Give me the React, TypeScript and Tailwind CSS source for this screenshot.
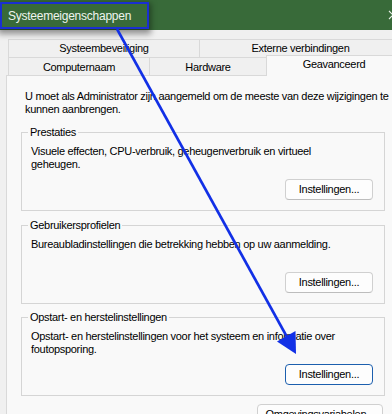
import React from "react";

type GroupProps = {
  title: string;
  lines: string[];
  className?: string;
};

const SettingsButton = ({ label, focused = false }: { label: string; focused?: boolean }) => (
  <button
    className={
      focused
        ? "flex h-[21px] w-[88px] items-center justify-center rounded-[4px] border border-[#1c5fae] bg-[#fdfdfd] text-[11px] leading-[13px] tracking-[-0.3px] text-black"
        : "flex h-[21px] w-[88px] items-center justify-center rounded-[4px] border border-[#d0d0d0] border-b-[#bdbdbd] bg-[#fdfdfd] text-[11px] leading-[13px] tracking-[-0.3px] text-black"
    }
  >
    {label}
  </button>
);

const GroupBox = ({ title, lines, className = "" }: GroupProps) => (
  <div className={`relative flex h-[79px] w-[364px] shrink-0 flex-col border border-[#d5d5d5] pl-[9px] pr-[11px] pt-[12px] pb-[10px] ${className}`}>
    <span className="absolute left-[6px] top-[-7px] bg-[#f9f9f9] px-[2px] leading-[13px]">{title}</span>
    <div className="whitespace-nowrap leading-[13px]">
      {lines.map((line) => (
        <div key={line}>{line}</div>
      ))}
    </div>
    <div className="mt-auto flex justify-end">
      <SettingsButton label="Instellingen..." focused={title.startsWith("Opstart")} />
    </div>
  </div>
);

const Tab = ({ label, className }: { label: string; className: string }) => (
  <div className={`flex shrink-0 items-center justify-center border-l border-t border-[#d9d9d9] ${className}`}>
    {label}
  </div>
);

export default function App() {
  return (
    <div className="relative h-[414px] w-[392px] overflow-hidden bg-[#f0f0f0] font-['Liberation_Sans',Arial,sans-serif] text-[11px] tracking-[-0.3px] text-black">
      {/* title bar */}
      <div className="relative h-[30px] bg-[#386a39]">
        <div className="absolute left-0 top-[2px] z-20 flex h-[27px] w-[149px] items-center border-2 border-[#1a2fd2] bg-[#386a39] pl-[6px] text-[12px] tracking-[-0.25px] text-[#eef4ee] shadow-[0_3px_6px_2px_rgba(0,0,0,0.4)]">
          Systeemeigenschappen
        </div>
        <svg className="absolute left-[388px] top-[10px]" width="10" height="10" viewBox="0 0 10 10">
          <path d="M1 1 L9 9 M9 1 L1 9" stroke="#e8f0e8" strokeWidth="1.1" />
        </svg>
      </div>

      {/* tabs */}
      <div className="pl-[8px] pt-[9px]">
        <div className="flex h-[18px]">
          <Tab label="Systeembeveiliging" className="w-[191px]" />
          <Tab label="Externe verbindingen" className="w-[203px] border-r" />
        </div>
        <div className="flex h-[18px]">
          <Tab label="Computernaam" className="w-[141px] pt-[2px]" />
          <Tab label="Hardware" className="w-[117px] pt-[2px]" />
          <Tab
            label="Geavanceerd"
            className="relative z-10 -mt-[2px] h-[21px] w-[136px] border-r bg-[#f9f9f9] pb-[3px]"
          />
        </div>
      </div>

      {/* page */}
      <div className="ml-[6px] flex h-[339px] flex-col border-l border-t border-[#d9d9d9] bg-[#f9f9f9] pl-[14px] pt-[14px]">
        <div className="shrink-0 whitespace-nowrap pl-[4px] leading-[13px]">
          <div>U moet als Administrator zijn aangemeld om de meeste van deze wijzigingen te</div>
          <div>kunnen aanbrengen.</div>
        </div>
        <GroupBox
          title="Prestaties"
          lines={["Visuele effecten, CPU-verbruik, geheugenverbruik en virtueel", "geheugen."]}
          className="mt-[16px]"
        />
        <GroupBox
          title="Gebruikersprofielen"
          lines={["Bureaubladinstellingen die betrekking hebben op uw aanmelding."]}
          className="mt-[14px]"
        />
        <GroupBox
          title="Opstart- en herstelinstellingen"
          lines={["Opstart- en herstelinstellingen voor het systeem en informatie over", "foutopsporing."]}
          className="mt-[13px]"
        />
        <button className="ml-[236px] mt-[8px] flex h-[21px] w-[126px] shrink-0 items-center justify-center rounded-[4px] border border-[#d0d0d0] bg-[#fdfdfd] text-[11px] tracking-[-0.3px]">
          Omgevingsvariabelen...
        </button>
      </div>

      {/* annotation arrow */}
      <svg className="pointer-events-none absolute left-0 top-0 z-30" width="392" height="414" viewBox="0 0 392 414">
        <line x1="117" y1="29" x2="287" y2="337" stroke="#1230e6" strokeWidth="2.6" />
        <polygon points="296,354 295.5,331 277,341.5" fill="#1230e6" />
      </svg>
    </div>
  );
}
